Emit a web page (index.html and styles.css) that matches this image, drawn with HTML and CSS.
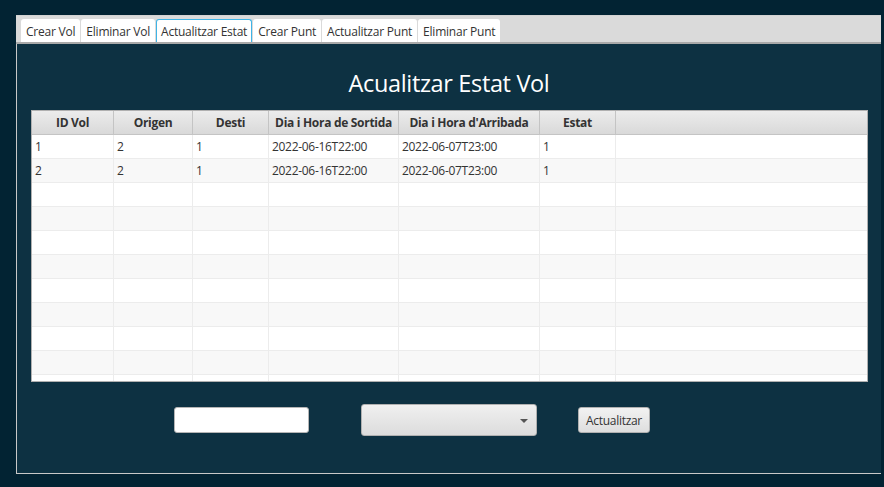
FILE: index.html
```html
<!DOCTYPE html>
<html>
<head>
<meta charset="utf-8">
<link rel="stylesheet" href="styles.css">
</head>
<body>
<div class="window">
  <div class="tabpane">
    <div class="tabbar">
      <div class="tab">Crear Vol</div>
      <div class="tab">Eliminar Vol</div>
      <div class="tab active">Actualitzar Estat</div>
      <div class="tab">Crear Punt</div>
      <div class="tab">Actualitzar Punt</div>
      <div class="tab">Eliminar Punt</div>
    </div>
    <div class="content">
      <h1 class="title">Acualitzar Estat Vol</h1>
      <div class="table">
        <div class="row head">
          <div class="c c1">ID Vol</div>
          <div class="c c2">Origen</div>
          <div class="c c3">Desti</div>
          <div class="c c4">Dia i Hora de Sortida</div>
          <div class="c c5">Dia i Hora d'Arribada</div>
          <div class="c c6">Estat</div>
          <div class="c c7"></div>
        </div>
        <div class="body">
          <div class="row">
            <div class="c c1">1</div><div class="c c2">2</div><div class="c c3">1</div><div class="c c4">2022-06-16T22:00</div><div class="c c5">2022-06-07T23:00</div><div class="c c6">1</div><div class="c c7"></div>
          </div>
          <div class="row odd">
            <div class="c c1">2</div><div class="c c2">2</div><div class="c c3">1</div><div class="c c4">2022-06-16T22:00</div><div class="c c5">2022-06-07T23:00</div><div class="c c6">1</div><div class="c c7"></div>
          </div>
          <div class="row"><div class="c c1"></div><div class="c c2"></div><div class="c c3"></div><div class="c c4"></div><div class="c c5"></div><div class="c c6"></div><div class="c c7"></div></div>
          <div class="row odd"><div class="c c1"></div><div class="c c2"></div><div class="c c3"></div><div class="c c4"></div><div class="c c5"></div><div class="c c6"></div><div class="c c7"></div></div>
          <div class="row"><div class="c c1"></div><div class="c c2"></div><div class="c c3"></div><div class="c c4"></div><div class="c c5"></div><div class="c c6"></div><div class="c c7"></div></div>
          <div class="row odd"><div class="c c1"></div><div class="c c2"></div><div class="c c3"></div><div class="c c4"></div><div class="c c5"></div><div class="c c6"></div><div class="c c7"></div></div>
          <div class="row"><div class="c c1"></div><div class="c c2"></div><div class="c c3"></div><div class="c c4"></div><div class="c c5"></div><div class="c c6"></div><div class="c c7"></div></div>
          <div class="row odd"><div class="c c1"></div><div class="c c2"></div><div class="c c3"></div><div class="c c4"></div><div class="c c5"></div><div class="c c6"></div><div class="c c7"></div></div>
          <div class="row"><div class="c c1"></div><div class="c c2"></div><div class="c c3"></div><div class="c c4"></div><div class="c c5"></div><div class="c c6"></div><div class="c c7"></div></div>
          <div class="row odd"><div class="c c1"></div><div class="c c2"></div><div class="c c3"></div><div class="c c4"></div><div class="c c5"></div><div class="c c6"></div><div class="c c7"></div></div>
          <div class="row"><div class="c c1"></div><div class="c c2"></div><div class="c c3"></div><div class="c c4"></div><div class="c c5"></div><div class="c c6"></div><div class="c c7"></div></div>
        </div>
      </div>
      <div class="controls">
        <input class="field" type="text">
        <div class="combo"><span class="arrow"></span></div>
        <button class="btn">Actualitzar</button>
      </div>
    </div>
  </div>
</div>
</body>
</html>
```

FILE: styles.css
```css
html, body {
  margin: 0;
  padding: 0;
}
body {
  background: #022333;
  width: 884px;
  height: 487px;
  overflow: hidden;
  font-family: "Open Sans", "Noto Sans", sans-serif;
  font-size: 12px;
  color: #333;
}
.window {
  padding: 15px 3px 0 16px;
}
.tabpane {
  width: 865px;
}
.tabbar {
  height: 26px;
  background: #dadada;
  border-top: 1px solid #d2d2d2;
  border-bottom: 2px solid #a9a9a9;
  display: flex;
  align-items: flex-end;
  gap: 1px;
  padding-left: 5px;
  box-sizing: content-box;
}
.tab {
  background: #fff;
  height: 23px;
  box-sizing: border-box;
  border-radius: 3px 3px 0 0;
  padding: 2px 5px 0 5px;
  display: flex;
  align-items: center;
  font-size: 12px;
  color: #333;
  white-space: nowrap;
  letter-spacing: -0.22px;
}
.tab.active {
  border: 1px solid #3fb4e6;
  border-bottom: none;
  padding: 1px 4px 0 4px;
}
.content {
  background: #0d3142;
  border-left: 1px solid #c8c8c8;
  border-bottom: 1px solid #c8c8c8;
  height: 430px;
  box-sizing: border-box;
  padding: 0 0 0 14px;
}
.title {
  margin: 0;
  padding-top: 23px;
  height: 66px;
  box-sizing: border-box;
  text-align: center;
  font-weight: 400;
  font-size: 23.5px;
  color: #fff;
  letter-spacing: -0.35px;
  padding-right: 14px;
}
.table {
  width: 837px;
  height: 272px;
  border: 1px solid #b0b0b0;
  box-sizing: border-box;
  background: #fff;
  overflow: hidden;
}
.row {
  display: flex;
  height: 24px;
  border-bottom: 1px solid #ececec;
  box-sizing: border-box;
  background: #fff;
}
.row.odd {
  background: #f8f8f8;
}
.row.head {
  background: linear-gradient(#ececec, #d9d9d9);
  border-bottom: 1px solid #c4c4c4;
}
.c {
  box-sizing: border-box;
  border-right: 1px solid #ececec;
  padding-left: 3px;
  display: flex;
  align-items: center;
  white-space: nowrap;
  overflow: hidden;
  letter-spacing: -0.3px;
}
.head .c {
  justify-content: center;
  font-weight: 700;
  border-right: 1px solid #c4c4c4;
  padding-left: 0;
  color: #333;
}
.c1 { width: 82px; }
.c2 { width: 79px; }
.c3 { width: 76px; }
.c4 { width: 130px; }
.c5 { width: 141px; }
.c6 { width: 76px; }
.c7 { flex: 1; border-right: none; }
.head .c7 { border-right: none; }
.controls {
  display: flex;
  align-items: center;
  height: 60px;
  padding-top: 8px;
  padding-left: 143px;
}
.field {
  width: 135px;
  height: 26px;
  box-sizing: border-box;
  border: 1px solid #b5b5b5;
  border-radius: 3px;
  background: #fff;
  margin: 0;
  padding: 0;
  outline: none;
}
.combo {
  margin-left: 52px;
  width: 176px;
  height: 32px;
  box-sizing: border-box;
  border: 1px solid #b0b0b0;
  border-radius: 3px;
  background: linear-gradient(#f0f0f0, #dcdcdc);
  position: relative;
}
.arrow {
  position: absolute;
  right: 8px;
  top: 14px;
  width: 0;
  height: 0;
  border-left: 4px solid transparent;
  border-right: 4px solid transparent;
  border-top: 4px solid #555;
}
.btn {
  margin-left: 41px;
  width: 72px;
  height: 26px;
  box-sizing: border-box;
  border: 1px solid #b0b0b0;
  border-radius: 3px;
  background: linear-gradient(#f2f2f2, #dedede);
  font-family: "Open Sans", "Noto Sans", sans-serif;
  font-size: 12px;
  color: #333;
  padding: 0;
  letter-spacing: -0.3px;
}
```
